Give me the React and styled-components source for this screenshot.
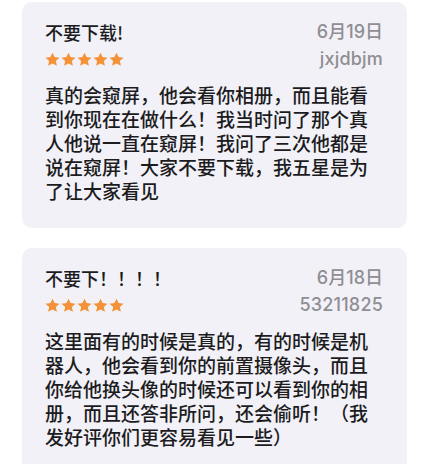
import React from 'react';
import styled, { createGlobalStyle } from 'styled-components';

const GlobalStyle = createGlobalStyle`
  body {
    margin: 0;
    background: #ffffff;
    font-family: "Noto Sans CJK SC", "Noto Sans", "Liberation Sans", sans-serif;
  }
`;

const Page = styled.div`
  display: flex;
  flex-direction: column;
  gap: 20px;
  padding: 2px 23px 0 22px;
  height: 464px;
  overflow: hidden;
  box-sizing: border-box;
`;

const Card = styled.div`
  flex-shrink: 0;
  background: #f2f1f7;
  border-radius: 10px;
  padding: 19px 24px 25px 23px;
`;

const Row = styled.div`
  display: flex;
  justify-content: space-between;
  align-items: center;
  height: 22px;
  margin-top: ${p => p.gap || 0}px;
`;

const Title = styled.div`
  font-size: 18px;
  font-weight: 500;
  color: #1c1c1e;
  line-height: 22px;
`;

const Meta = styled.div`
  font-family: "Inter", "Noto Sans CJK SC", sans-serif;
  font-size: 18px;
  font-weight: 500;
  color: #8e8e93;
  line-height: 22px;
  letter-spacing: ${p => (p.wide ? '0.2px' : '0')};
`;

const Stars = styled.div`
  display: flex;
  gap: 1px;
`;

const Body = styled.p`
  margin: 13px 0 0;
  font-size: 19px;
  line-height: 24px;
  font-weight: 500;
  color: #1c1c1e;
`;

const Star = () => (
  <svg width="15" height="15" viewBox="0 0 24 23">
    <path
      d="M12 0.5l3.4 7.1 7.8 0.9-5.8 5.3 1.6 7.8L12 17.8l-7 3.8 1.6-7.8L0.8 8.5l7.8-0.9z"
      fill="#f4923a"
    />
  </svg>
);

const reviews = [
  {
    title: '不要下载!',
    date: '6月19日',
    user: 'jxjdbjm',
    text: '真的会窥屏，他会看你相册，而且能看到你现在在做什么！我当时问了那个真人他说一直在窥屏！我问了三次他都是说在窥屏！大家不要下载，我五星是为了让大家看见',
  },
  {
    title: '不要下！！！！',
    date: '6月18日',
    user: '53211825',
    text: '这里面有的时候是真的，有的时候是机器人，他会看到你的前置摄像头，而且你给他换头像的时候还可以看到你的相册，而且还答非所问，还会偷听！（我发好评你们更容易看见一些）',
  },
];

export default function App() {
  return (
    <>
      <GlobalStyle />
      <Page>
        {reviews.map(r => (
          <Card key={r.date}>
            <Row>
              <Title>{r.title}</Title>
              <Meta>{r.date}</Meta>
            </Row>
            <Row gap={5}>
              <Stars>
                {[0, 1, 2, 3, 4].map(i => (
                  <Star key={i} />
                ))}
              </Stars>
              <Meta wide>{r.user}</Meta>
            </Row>
            <Body>{r.text}</Body>
          </Card>
        ))}
      </Page>
    </>
  );
}
